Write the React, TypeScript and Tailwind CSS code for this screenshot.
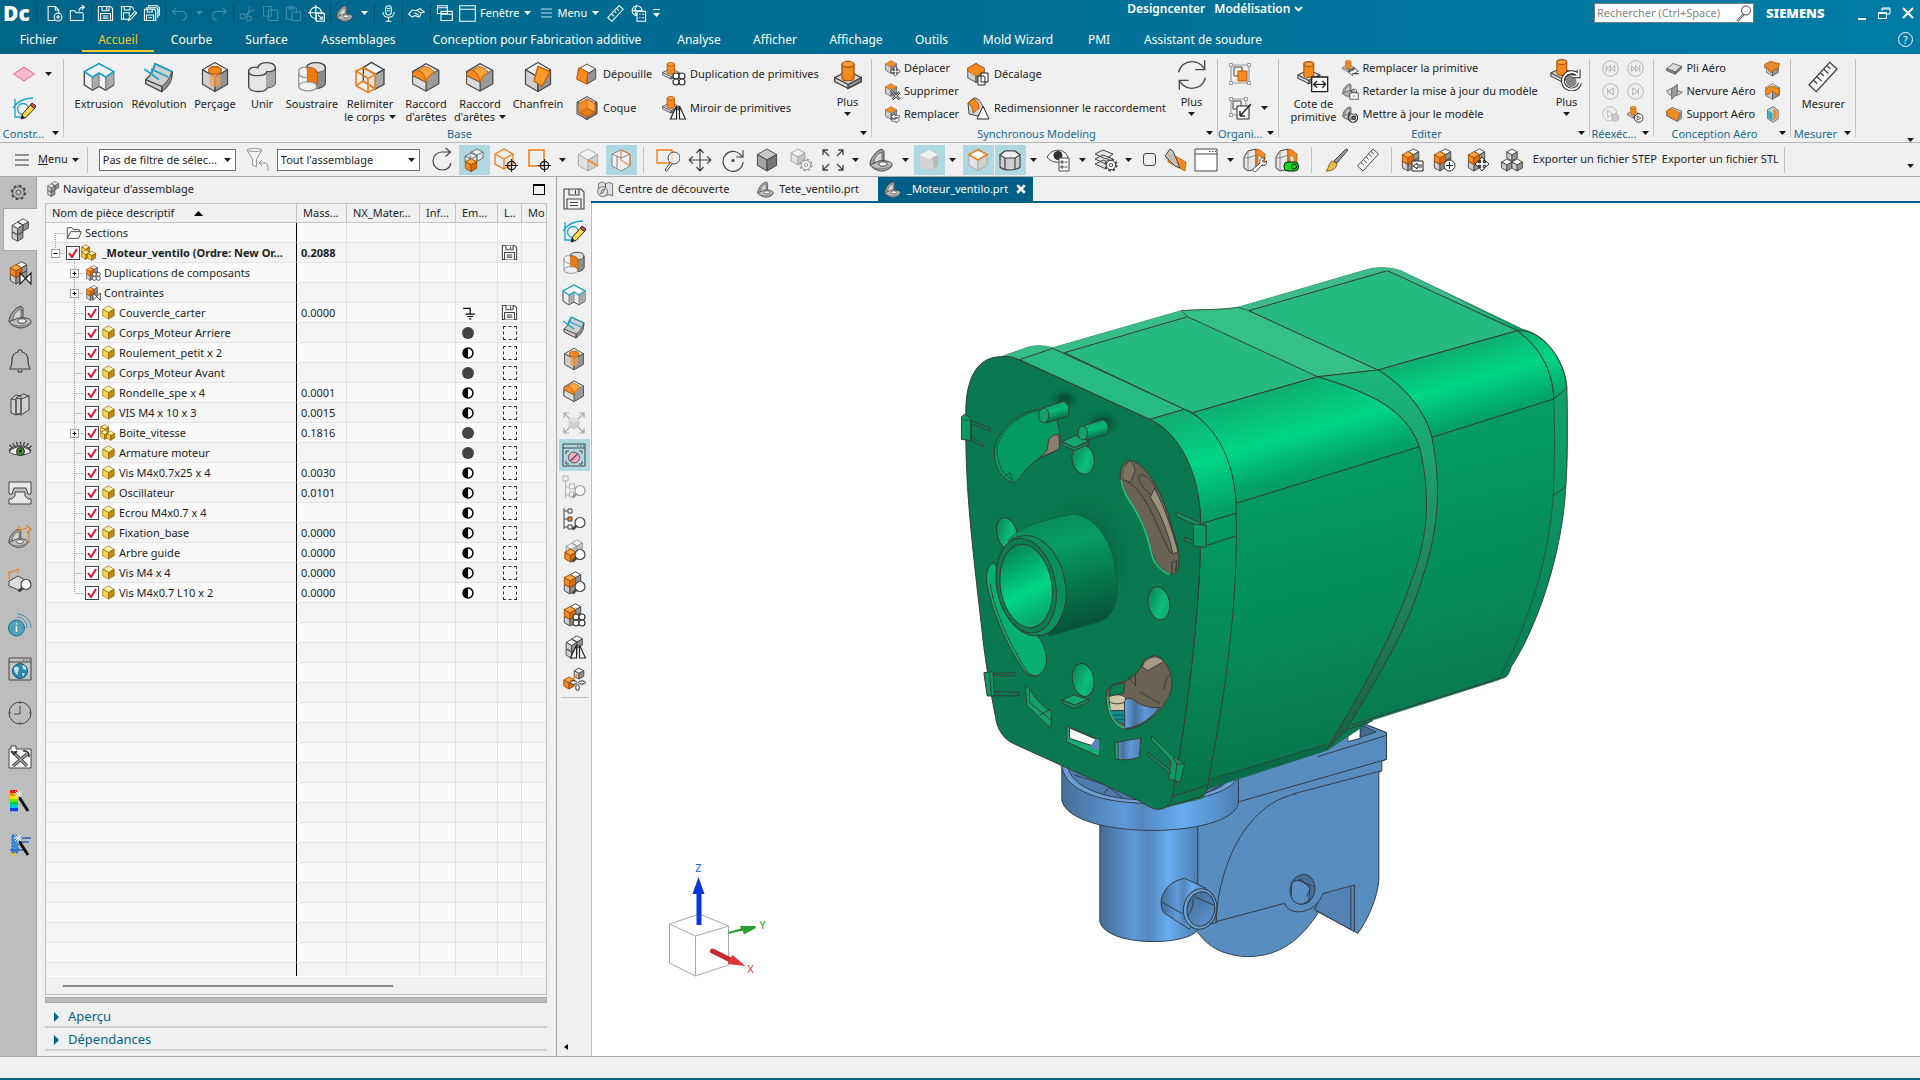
import type { ReactNode } from "react";

type IconMap = Record<string, ReactNode>;

const INK = "#454545";
const ORANGE = "#f58a1f";

const tones = {
  gray: ["#f4f4f4", "#cfcfcf", "#949494", INK],
  pale: ["#f3f3f3", "#e2e2e2", "#cfcfcf", "#a8a8a8"],
  dark: ["#c9c9c9", "#a2a2a2", "#777777", "#3c3c3c"],
  orange: ["#ffa640", "#f58a1f", "#e06c08", "#9a4c08"],
  yellow: ["#fff3a0", "#ffd83a", "#c58a10", "#7a5608"],
};

function Cube({ x = 12, y = 12, s = 9, tone = "gray" }: { x?: number; y?: number; s?: number; tone?: keyof typeof tones }) {
  const [top, left, right, line] = tones[tone];
  const w = s * 0.87;
  const h = s / 2;
  return (
    <g stroke={line} strokeWidth={0.9} strokeLinejoin="round">
      <path d={`M${x} ${y - s}l${w} ${h}l${-w} ${h}l${-w} ${-h}z`} fill={top} />
      <path d={`M${x - w} ${y - h}l${w} ${h}v${s}l${-w} ${-h}z`} fill={left} />
      <path d={`M${x + w} ${y - h}l${-w} ${h}v${s}l${w} ${-h}z`} fill={right} />
    </g>
  );
}

const stack = (
  <>
    <Cube x={13.5} y={12.5} s={6} />
    <Cube x={13.5} y={6.8} s={6} />
    <Cube x={8} y={16.5} s={6.5} />
    <Cube x={8} y={10} s={6.5} tone="orange" />
  </>
);
const grayStack = (
  <>
    <Cube x={15} y={7} s={6.2} />
    <Cube x={9.5} y={17} s={6.2} />
    <Cube x={9.5} y={10.5} s={6.2} />
  </>
);
const boss = (
  <>
    <path d="M2 14l10-5 10 5v3l-10 5-10-5z" fill="#dcdcdc" stroke={INK} />
    <path d="M22 14l-10 5v3l10-5z" fill="#8f8f8f" stroke={INK} />
    <path d="M2 14l10 5" fill="none" stroke={INK} />
    <path d="M7.500 4v10c0 3 9 3 9 0V4z" fill={ORANGE} stroke="#a85208" />
    <ellipse cx="12" cy="4" rx="4.500" ry="2.200" fill="#ffa23c" stroke="#a85208" />
  </>
);
const smallBoss = <g transform="translate(-1 -1) scale(.82)">{boss}</g>;
const mag = (
  <g stroke={INK}>
    <path d="M14.500 18.500l-4 4" strokeWidth="2.600" />
    <circle cx="18" cy="15.500" r="5" fill="#fff" strokeWidth="1.200" />
  </g>
);
const four = (
  <g fill="#fff" stroke="#333" strokeWidth="1.200">
    <circle cx="14" cy="14" r="3" />
    <circle cx="20" cy="14" r="3" />
    <circle cx="14" cy="20" r="3" />
    <circle cx="20" cy="20" r="3" />
  </g>
);
const mirror = (
  <g fill="#fff" stroke="#222" strokeWidth="1.200">
    <path d="M14.500 10v13H8.500zM17.500 10v13h6z" />
  </g>
);
const moveBadge = (
  <g stroke="#222" fill="#fff">
    <path d="M16 9l3 3.500h-1.700v2.200h2.200V13l3.500 3-3.500 3v-1.700h-2.200v2.200H19l-3 3.500-3-3.500h1.700v-2.200h-2.200V19L9 16l3.500-3v1.700h2.200v-2.200H13z" />
  </g>
);
const bracket = (
  <>
    <path d="M1 17C1 10 7 3 12 1.500c2.500 0 3 1 3 3V13l-4 5-6 1z" fill="#a0a0a0" stroke={INK} />
    <path d="M5 15C5 10 8 6 13 4v8l-4 4z" fill="#d6d6d6" stroke={INK} strokeWidth=".7" />
    <path d="M1 17l9-4c4-1 13 0 13 3.500 0 3.500-5 6-10 6.500-5 0-10-3-12-6z" fill="#bdbdbd" stroke={INK} />
    <path d="M1 17c3 3 7 4.500 12 4 5-.500 9-2 10-4.500" fill="none" stroke="#6a6a6a" />
    <ellipse cx="14" cy="16" rx="4.200" ry="2.200" fill="#f0f0f0" stroke={INK} />
  </>
);
const smallBracket = <g transform="scale(.85)">{bracket}</g>;
const floppy = (
  <>
    <path d="M2 2h17l3 3v17H2z" />
    <path d="M7 2v6h10V2M13.500 3v4M5 22V12h14v10M8 15.500h8M8 18.500h8" />
  </>
);
const pencil = (
  <g>
    <path d="M9 23l1.500-5 8-9 4 3.500-8.500 9z" fill="#ffd84a" stroke="#222" />
    <path d="M18.500 9l1.500-2 4 3-1.500 2.500z" fill="#e04848" stroke="#222" />
    <path d="M9 23l1.200-4 2.600 2.600z" fill="#222" />
  </g>
);
const crosshair = (
  <g stroke="#222" fill="none" strokeWidth="1.200">
    <circle cx="17.500" cy="17.500" r="4.200" />
    <path d="M17.500 11v13M11 17.500h13" />
  </g>
);
const gear = (
  <g fill="#fff" stroke={INK}>
    <circle cx="17" cy="17" r="5.200" strokeDasharray="2.300 1.780" strokeWidth="2.600" />
    <circle cx="17" cy="17" r="4.600" />
    <circle cx="17" cy="17" r="1.700" />
  </g>
);
const fillet = (
  <>
    <path d="M2 8l10-6 9.500 5v10L12 22.500 2 17z" fill="#f3f3f3" stroke={INK} />
    <path d="M21.500 7v10L12 22.500V16c1-4 4-7 9.500-9z" fill="#9a9a9a" stroke={INK} strokeWidth=".6" />
    <path d="M2 10l8-5c4 0 7 2 7.500 4L12 16v1L2 12.500z" fill={ORANGE} />
    <path d="M2 17v-7c1-3 3-3 4-3 4 1 6 5 6 9v.500z" fill={ORANGE} stroke="#b85a08" strokeWidth=".7" />
    <path d="M6 7l5-3c4 1 7 3 7 5-3 1-5 3-6 7-.500-4-2-8-6-9z" fill="#f9a43c" stroke="#b85a08" strokeWidth=".7" />
    <path d="M2 17l10 5.500V16L2 11z" fill="#dcdcdc" stroke={INK} strokeWidth=".7" />
  </>
);
const expandArrows = <path d="M2 7V2h5M2 2l6 6M17 2h5v5M22 2l-6 6M2 17v5h5M2 22l6-6M22 17v5h-5M22 22l-6-6" />;
const clipBody = (
  <>
    <path d="M1 9l4-6 8-2v20l-8 2-4-3z" fill="#e6e6e6" stroke={INK} />
    <path d="M5 3v20M1 9l4 1 8-3" fill="none" stroke="#888" />
    <path d="M13 1v20l2-1V7l4 2v9l3-1V6l-5-4z" fill={ORANGE} stroke="#a85208" strokeWidth=".7" />
  </>
);

const ICONS: IconMap = {
  plane: <path d="M1.500 12L12 5l10.500 7L12 19z" fill="#f7b9cd" stroke="#e0668f" />,
  sketch: (
    <>
      <path d="M3 3v18h10M1 12C5 6 12 2 21 2" fill="none" stroke="#15a3cc" strokeWidth="1.300" />
      <circle cx="11" cy="13" r="5.500" fill="none" stroke="#15a3cc" strokeWidth="1.300" />
      {pencil}
    </>
  ),
  extrude: (
    <>
      <path d="M1 8v10l6 4 5-3 5 3 6-4V8L12 2z" fill="#efefef" stroke={INK} />
      <path d="M7 11.500v10l5-3v-10zM17 11.500v10l6-4V8z" fill="#a9a9a9" />
      <path d="M7 11v10.500M17 11v10.500M12 9v10" stroke="#888" />
      <path d="M1 8l11-6 11 6-6 4-5-3-5 3z" fill="#f7f7f7" stroke="#15a3cc" strokeWidth="1.200" />
    </>
  ),
  revolve: (
    <>
      <path d="M2 14c4-3 6-7 7-12l13 6c0 6-3 11-8 15L2 17z" fill="#cfcfcf" stroke={INK} />
      <path d="M14 19c4-3 6-6 7.500-11V13c-1 4-3 7-7.500 10z" fill="#8c8c8c" stroke={INK} strokeWidth=".6" />
      <path d="M2 14l12 5v4" fill="none" stroke={INK} />
      <path d="M9 2l13 6M6 6l13 6M1 6l11 8M9 2C8 5 7 7 6 9" fill="none" stroke="#15a3cc" strokeWidth="1.300" />
    </>
  ),
  hole: (
    <>
      <Cube s={10.8} />
      <path d="M8 8v9c0 3 8 3 8 0V8z" fill="#f0a050" opacity=".75" />
      <ellipse cx="12" cy="7" rx="4.800" ry="2.900" fill={ORANGE} stroke="#c06008" />
    </>
  ),
  unite: (
    <>
      <path d="M9 5c0-5 13-5 13 0v11c0 3-4 4-6 4-1 4-14 4-14-1V8c0-3 4-4 7-3z" fill="#e6e6e6" stroke={INK} />
      <path d="M15 9v11c3 0 7-1 7-4V5c0 2-2 3-5 3z" fill="#a8a8a8" />
      <path d="M2 8c0 4 13 4 13.500 0 4 0 6.500-1 6.500-3" fill="none" stroke={INK} />
    </>
  ),
  subtract: (
    <>
      <path d="M8 5c0-5 14-5 14 0v11c0 3-3 4-6 4.500V9c-1-3-4-4-8-4z" fill="#dedede" stroke={INK} />
      <path d="M15.500 8.500c3 0 6.500-1 6.500-3.500v11c0 3-3 4-6 4.500z" fill="#8e8e8e" stroke={INK} strokeWidth=".6" />
      <path d="M2 18.500V9c0 3 4 4 7 3.500v4c-4 0-7 0-7 2z" fill="#f7f7f7" />
      <path d="M8.500 5c4-1 7 1 7.500 5v10c-1-3-3-5-7.500-4z" fill="#f07a10" stroke="#b85a08" strokeWidth=".6" />
      <path d="M2 8v11c0 4.500 14 4.500 14 0M2 8c0-3 4-4 6.500-3M2 8c0 4 4 4.500 6.500 4.500M2 19c0-4 12-5 14 0" fill="none" stroke="#999" />
    </>
  ),
  trim: (
    <>
      <path d="M7 5l6-4 9.500 5.500L16 10z" fill="#f4f4f4" stroke={INK} />
      <path d="M22.500 6.500v11L16 21V10z" fill="#a8a8a8" stroke={INK} />
      <path d="M7 5l9 5v11l-9-6z" fill="#e2e2e2" stroke={INK} />
      <path d="M1.500 7.500L7 5l9 5-5.500 3zM1.500 7.500v11l9 5 5.500-3V10M10.500 13v10.500M1.500 18.500L7 15l9 6" fill="none" stroke="#ee7c12" strokeWidth="1.200" />
    </>
  ),
  fillet,
  chamfer: (
    <>
      <Cube s={10.8} />
      <path d="M12 4l9 4-6 11-6-4z" fill="#ff9a28" stroke="#c06008" />
    </>
  ),
  draft: (
    <>
      <Cube s={10} />
      <path d="M4 5.500L13 10l-1.500 12L1.500 17z" fill={ORANGE} stroke="#b85a08" />
    </>
  ),
  shell: (
    <>
      <Cube s={11.500} tone="dark" />
      <path d="M4 7.500l8-4.500 8 4.500v9L12 21l-8-4.500z" fill="#ffa640" stroke="#b85a08" />
      <path d="M4 16.500l8-4.500 8 4.500L12 21zM12 3v9" fill="#e77a14" stroke="#b85a08" />
      <path d="M4 7.500V16.500l8-4.500V3z" fill="#f08a22" />
    </>
  ),
  boss,
  bossPattern: <>{smallBoss}{four}</>,
  bossMirror: <>{smallBoss}{mirror}</>,
  bossSwap: (
    <>
      {smallBoss}
      <path d="M9 14h8v-3l6 4.500-6 4h8M23 19H15v3l-6-4.500 6-3" fill="#fff" stroke="#222" />
    </>
  ),
  bossDim: (
    <>
      {smallBoss}
      <path d="M11 12h12v11H11z" fill="#fff" stroke="#222" />
      <path d="M12.500 17.500h9M15 15l-2.500 2.500L15 20M19 15l2.500 2.500L19 20" fill="none" stroke="#222" />
    </>
  ),
  bossRedo: (
    <>
      {smallBoss}
      <circle cx="16" cy="17" r="4" fill="#888" />
      <path d="M21 12a6.500 6.500 0 1 0 1.500 6M21.500 8v5h-5" fill="none" stroke="#222" strokeWidth="2.800" />
      <path d="M21 12a6.500 6.500 0 1 0 1.500 6M21.500 8v5h-5" fill="none" stroke="#fff" strokeWidth="1.400" />
    </>
  ),
  bossPlay: (
    <>
      {smallBoss}
      <circle cx="16.500" cy="17" r="6" fill="#fff" stroke="#222" strokeWidth="1.300" />
      <path d="M14.500 14l5 3-5 3z" fill="none" stroke="#222" />
    </>
  ),
  moveFace: <><Cube x={10} y={10} s={9} /><path d="M10 1l8 4.500L10 10 2 5.500z" fill={ORANGE} />{moveBadge}</>,
  deleteFace: (
    <>
      <Cube x={10} y={10} s={9} />
      <path d="M10 1l8 4.500L10 10 2 5.500z" fill={ORANGE} />
      <path d="M12 13l10 10M22 13L12 23" stroke="#222" strokeWidth="3.400" />
      <path d="M12 13l10 10M22 13L12 23" stroke="#fff" strokeWidth="1.400" />
    </>
  ),
  replaceFace: (
    <>
      <Cube x={10} y={10} s={9} />
      <path d="M10 1l8 4.500L10 10 2 5.500z" fill={ORANGE} />
      <path d="M10 15l5-4v2.500h7v3h-7V19zM22 20l-5 4v-2.500h-6v-3h6V16z" fill="#fff" stroke="#222" strokeWidth=".8" />
    </>
  ),
  offsetFace: (
    <>
      <Cube x={10} y={11} s={9.5} />
      <path d="M10 1.500l8 4.700v4L10 14l-8.200-5V6z" fill={ORANGE} stroke="#a85208" strokeWidth=".6" />
      <path d="M15 11h7v9h-7zM12 14h6l1 2v7h-7z" fill="#fff" stroke="#222" />
    </>
  ),
  resizeBlend: (
    <>
      <path d="M2 7l6-5c5 0 9 6 9 12l-5 6-9-2z" fill="#d6d6d6" stroke={INK} />
      <path d="M2 7l5-4c4 1 6 5 6 9l-6 5c0-5-2-8-5-10z" fill={ORANGE} stroke="#a85208" />
      <path d="M17 10l6 13H11z" fill="#fff" stroke="#222" />
    </>
  ),
  refresh: (
    <g fill="none" stroke={INK}>
      <path d="M2 10C3 5 7 2 12 2c4 0 7 2 9 5M21.500 1v7h-7M22 14c-1 5-5 8-10 8-4 0-7-2-9-5M2.500 23v-7h7" />
    </g>
  ),
  group: (
    <g fill="none" stroke="#999">
      <path d="M3 3h18v18H3z" strokeWidth="1.200" />
      <path d="M1.500 1.500h3v3h-3zM19.500 1.500h3v3h-3zM1.500 19.500h3v3h-3zM19.500 19.500h3v3h-3z" fill="#fff" />
      <path d="M6 5h8v9H6z" stroke={INK} />
      <path d="M10 9h9v10h-9z" fill={ORANGE} stroke="#b85a08" />
    </g>
  ),
  groupEdit: (
    <g fill="none" stroke="#999">
      <path d="M3 3h15v16H3z" />
      <path d="M1.500 1.500h3v3h-3zM16.500 1.500h3v3h-3zM1.500 17.500h3v3h-3z" fill="#fff" />
      <path d="M5 5h8v8H5z" stroke={INK} />
      <path d="M9 10h12v13H9z" fill="#fff" stroke="#222" />
      <path d="M12 20v-5M12 20h5M12 20L23 8" stroke="#222" strokeWidth="1.500" />
    </g>
  ),
  lockPart: (
    <>
      {smallBracket}
      <path d="M11 14h12v9H11z" fill="#fff" stroke="#222" />
      <path d="M13.500 14v-3c0-3 7-3 7 0v3M17 17v3" fill="none" stroke="#222" />
    </>
  ),
  updatePart: (
    <>
      {smallBracket}
      <path d="M12 13h-2v-5M10 13a6.500 6.500 0 1 0 9-2M14 17c0-3 5-3 5 0s-4 3-4 0" fill="none" stroke="#222" strokeWidth="1.500" />
    </>
  ),
  first: <g fill="none" stroke="#999"><circle cx="12" cy="12" r="11" /><path d="M6 7v10M12 8l-5 4 5 4zM18 8l-5 4 5 4z" /></g>,
  last: <g fill="none" stroke="#999"><circle cx="12" cy="12" r="11" /><path d="M18 7v10M6 8l5 4-5 4zM12 8l5 4-5 4z" /></g>,
  prev: <g fill="none" stroke="#999"><circle cx="12" cy="12" r="11" /><path d="M8 7v10M16 7l-7 5 7 5z" /></g>,
  next: <g fill="none" stroke="#999"><circle cx="12" cy="12" r="11" /><path d="M16 7v10M8 7l7 5-7 5z" /></g>,
  playGray: <g fill="none" stroke="#a4a4a4"><circle cx="11" cy="11" r="10" /><path d="M8 6l7 5-7 5z" /><path d="M14 13l5-3 4 3v6l-5 3-4-3z" fill="#ccc" /></g>,
  aeroFold: (
    <g stroke={INK}>
      <path d="M1 12L10 5l12 4-9 8z" fill="#dcdcdc" />
      <path d="M1 12v3l12 5v-3zM22 9v3l-9 8v-3z" fill="#8f8f8f" />
    </g>
  ),
  aeroRib: (
    <g stroke={INK}>
      <path d="M1 11l8-4v11l-5-2zM14 10l9 3-8 5-4-1z" fill="#d8d8d8" />
      <path d="M8 8l8-6v13l-8 8z" fill="#9c9c9c" />
    </g>
  ),
  aeroSupport: (
    <>
      <path d="M1 7L9 2l13 5v10l-6 5L1 14z" fill="#d0d0d0" stroke={INK} />
      <path d="M16 12l6-5v10l-6 5z" fill="#8e8e8e" />
      <path d="M1 7l6-4 12 6-3 12L2 13z" fill={ORANGE} stroke="#a85208" strokeWidth=".7" />
    </>
  ),
  aeroA: (
    <>
      <Cube y={13} s={9.5} />
      <path d="M1 6l8-4 13 3-2 7-7 2-2 4-4-2-1-4-5-1z" fill="#e9862c" stroke="#9a5210" />
    </>
  ),
  aeroB: (
    <>
      <Cube s={11} />
      <path d="M2 12c2-10 18-10 20 0l-2 5-4-2c-1-4-7-4-8 0l-4 2z" fill={ORANGE} stroke="#9a5210" />
    </>
  ),
  aeroC: (
    <>
      <path d="M5 5l8-4 7 5v12l-7 5-8-5z" fill="#cfcfcf" stroke={INK} />
      <path d="M6 6l6 4v11l-6-4z" fill="#32a8c8" />
      <path d="M13 4l5 3v10l-5 4z" fill={ORANGE} />
    </>
  ),
  ruler: (
    <g fill="#f7f7f7" stroke={INK}>
      <path d="M17 1l5.500 5L7 23l-5.500-5z" />
      <path d="M15 3.500l2.500 2.300M12.500 6l3.500 3.300M10 9l2.500 2.300M7.500 11.800l3.500 3.300M5 14.500l2.500 2.300" />
    </g>
  ),
  funnel: (
    <g fill="#f4f4f4" stroke="#999">
      <path d="M1 2c0-2 15-2 15 0L10.500 11v8l-4-2v-6z" />
      <path d="M1 2c1 2 14 2 15 0M16 12l-3 3 3 3M13 15h6c3 0 3 5 3 8" fill="none" />
    </g>
  ),
  rotateCw: <path d="M20 15c-1 4-4 7-9 7-5 0-9-4-9-9s4-9 9-9h8M14.500 0L19.500 4l-5 4.500" fill="none" stroke={INK} strokeWidth="1.200" />,
  selTop: (
    <>
      <g stroke="#666" strokeWidth=".9">
        <path d="M9 4l6-3 6 3v6l-7 4-6-3z" fill="#e9f1f3" fillOpacity=".8" />
        <path d="M9 4l6 3 6-3M15 7v6M3 8l6-3 6 3v6l-6 3-6-3zM3 8l6 3 6-3" fill="#e9f1f3" fillOpacity=".6" />
      </g>
      <Cube x={9} y={17} s={6.500} tone="orange" />
    </>
  ),
  boxTarget: <><path d="M1 6l9-5 9 5v10l-9 5-9-5zM1 6l9 5 9-5M10 11v10" fill="none" stroke="#ee7c12" strokeWidth="1.300" />{crosshair}</>,
  squareTarget: <><path d="M2 2h15v16H2z" fill="none" stroke="#ee7c12" strokeWidth="1.500" />{crosshair}</>,
  cubeEdge: <><Cube s={11} tone="pale" /><path d="M12 12l10 6" stroke={ORANGE} strokeWidth="2" /></>,
  cubeWire: (
    <g fill="#f0f0f0" stroke="#888">
      <path d="M3 6l9-4 9 4v12l-9 5-9-5z" />
      <path d="M3 6l9 4 9-4M8 8v12" fill="none" />
      <path d="M12 2v10l9 6V6z" fill="none" stroke="#e8742a" />
    </g>
  ),
  zoomBox: <><path d="M1 2h15v13H1z" fill="none" stroke="#ee7c12" strokeWidth="1.300" /><circle cx="18" cy="10" r="6" fill="#efefef" fillOpacity=".7" stroke={INK} /><path d="M14 15l-5 7 1.500 1.500L16 16" fill="#fff" stroke={INK} /></>,
  pan: <path d="M12 1v22M1 12h22M12 1L8.500 5M12 1l3.500 4M12 23l-3.500-4M12 23l3.500-4M1 12l4-3.500M1 12l4 3.500M23 12l-4-3.500M23 12l-4 3.500" fill="none" stroke={INK} strokeWidth="1.200" />,
  orbit: <g fill="none" stroke={INK} strokeWidth="1.200"><path d="M21 9a10 10 0 1 0 1 5M22 2v7h-7" /><circle cx="12" cy="12.500" r="1" fill={INK} /></g>,
  cube: <Cube s={11} tone="dark" />,
  cubeGear: <g opacity=".45"><Cube x={9} y={9} s={8} />{gear}</g>,
  fit: <g fill="none" stroke={INK} strokeWidth="1.300">{expandArrows}</g>,
  bracket,
  shade: <><path d="M3 7l9-5 9 5v11c-3 5-15 5-18 0z" fill="#d3d3d3" /><path d="M3 7l9-5 9 5-9 4z" fill="#f1f1f1" /><path d="M15 10l6-3v11l-4 3z" fill="#bababa" /></>,
  topEdges: <><Cube s={10.5} tone="pale" /><path d="M12 1.500l9 5.200-9 5.300-9-5.300z" fill="#fff" stroke="#ee7c12" strokeWidth="1.500" /></>,
  shadeEdges: (
    <g stroke={INK} strokeWidth="1.200">
      <path d="M2 7l5-4h10l5 4v12c-4 4-16 4-20 0z" fill="#cdcdcd" />
      <path d="M2 7l5-4h10l5 4-5 3H7zM7 10v11.500M17 10v11.500" fill="#efefef" />
    </g>
  ),
  eyeList: (
    <>
      <path d="M1 9c5-9 17-9 21 0-5 7-16 7-21 0z" fill="#fff" stroke={INK} />
      <circle cx="12" cy="7.500" r="4.500" fill="#333" />
      <path d="M13 10h10v13H13z" fill="#fff" stroke={INK} />
      <path d="M15 13h2v2h-2zM15 18h2v2h-2zM18.500 14h3M18.500 19h3" fill="none" stroke={INK} />
    </>
  ),
  layers: (
    <>
      <path d="M1 16l8-4 10 4-7 5zM1 11l8-4 10 4-7 5zM1 6l8-4 10 4-7 5z" fill="#e4e4e4" stroke={INK} />
      {gear}
    </>
  ),
  clip: (
    <>
      <path d="M3 4l18 10-1 9L3 14z" fill={ORANGE} stroke="#a85208" strokeWidth=".7" transform="translate(1 0)" />
      <path d="M1 8l5-7 3 2 7 17-5-2z" fill="#c4c4c4" fillOpacity=".9" stroke={INK} />
    </>
  ),
  windowLight: <><path d="M1 1h22v22H1z" fill="#fff" stroke={INK} /><path d="M1 6h22M15 3.500h1.500M18 3.500h1.500M21 3.500h1" stroke={INK} /></>,
  clipTool: (
    <>
      {clipBody}
      <path d="M10 21l7-6c-1-4 2-6 5-5l-2.500 3 1.500 1.500L24 13c0 3-2 5-5 4l-6 6.500c-2 1-4-1-3-2.500z" fill="#fff" stroke={INK} />
    </>
  ),
  clipToggle: (
    <>
      {clipBody}
      <rect x="9" y="14" width="14.500" height="9" rx="4" fill="#14d81e" stroke="#111" />
      <circle cx="19" cy="18.500" r="2.500" fill="#14d81e" stroke="#111" />
    </>
  ),
  brush: <><path d="M22 1l2 1L13 15l-3-2z" fill="#999" stroke={INK} /><path d="M9 13l4 3c-1 5-5 7-11 7 3-2 2-8 7-10z" fill="#e7c04a" stroke="#7a5c10" /></>,
  addInto: <>{stack}<path d="M12 13h11v10H12z" fill="#fff" stroke="#222" /><path d="M22 17h-5v-2l-4 3 4 3v-2h5" fill="none" stroke="#222" /></>,
  addPlus: <>{stack}<circle cx="17.500" cy="17.500" r="5.500" fill="#fff" stroke="#222" /><path d="M17.500 14v7M14 17.500h7" stroke="#222" /></>,
  addMove: <>{stack}{moveBadge}</>,
  three: <><Cube y={7} s={6} /><Cube x={6.800} y={17} s={6} /><Cube x={17.200} y={17} s={6} /></>,
  grayStack,
  stackLink: <>{stack}<path d="M12 12v11l11-11v11z" fill="#fff" stroke="#222" strokeWidth="1.200" /></>,
  stackPattern: <>{stack}{four}</>,
  stackMag: <>{stack}{mag}</>,
  ghostMag: <><g opacity=".5">{grayStack}</g><Cube x={8.500} y={16.500} s={6.500} tone="orange" />{mag}</>,
  stackMirror: <>{grayStack}{mirror}</>,
  explode: (
    <>
      <Cube x={17} y={6.500} s={5.500} />
      <Cube x={7} y={16} s={6} tone="orange" />
      <path d="M11 12l4-4" stroke="#ee7c12" strokeWidth="1.500" />
      <g fill="#fff" stroke="#222">
        <ellipse cx="11.500" cy="15.500" rx="3.200" ry="1.800" />
        <ellipse cx="20" cy="15.500" rx="3.400" ry="1.600" />
        <ellipse cx="15.500" cy="20.500" rx="1.800" ry="3" />
      </g>
    </>
  ),
  bigGear: (
    <g fill="none" stroke={INK}>
      <circle cx="12" cy="12" r="9.500" strokeWidth="2.600" strokeDasharray="4 3.460" />
      <circle cx="12" cy="12" r="8" fill="#bdbdbd" strokeWidth="1.200" />
      <circle cx="12" cy="12" r="3.500" strokeWidth="1.200" />
    </g>
  ),
  bell: <g fill="none" stroke={INK} strokeWidth="1.200"><path d="M10 3c0-3 4-3 4 0 4 1 6 4 6 8 0 6 1 7 2 8v1H2v-1c1-1 2-2 2-8 0-4 2-7 6-8zM10 21c0 3 4 3 4 0" /></g>,
  books: <g fill="#cfcfcf" stroke={INK}><path d="M3 6l5-4 5 1v17l-5 2-5-2zM8 5l7-4 6 2v14l-8 5-5-1zM8 5l5 1 8-3M13 6v16M3 6l5 1v15" /></g>,
  eye: (
    <>
      <path d="M1 15c6-7 16-7 22 0-6 4-16 4-22 0z" fill="#eee" stroke="#444" />
      <circle cx="12.500" cy="14.500" r="4" fill="#4f8f2a" stroke="#222" />
      <circle cx="12.500" cy="14" r="1.600" fill="#111" />
      <path d="M1 14C5 7 19 7 23 14M4 10L1.500 8M6.500 9l-2-3M9.500 8l-1-3M12.500 7.500v-3M15.500 8l1-3M18.500 9l2-3M21 11l2.500-2" fill="none" stroke="#333" strokeWidth="1.200" />
    </>
  ),
  press: <><path d="M1 1h22v12h-3l-2-6H6l-2 6H1z" fill="#e8e8e8" stroke={INK} /><path d="M1 23v-5h3l3-3v-4h10v4l3 3h3v5z" fill="#e8e8e8" stroke={INK} /></>,
  bracketDim: <><g transform="translate(0 3) scale(.85)">{bracket}</g><path d="M11 5l8-2M21 5v13M11 1v7M19 8l4-4M18 0l6 5" fill="none" stroke="#ee7c12" strokeWidth="1.200" /></>,
  partMag: <><path d="M1 12l9-5 11 6-8 9-12-5z" fill="#dcdcdc" stroke={INK} /><path d="M1 10V2M1 4l10-4M10 0v5" stroke="#ee7c12" />{mag}</>,
  info: (
    <>
      <circle cx="8.500" cy="15" r="8" fill="#4fa0bd" stroke="#24708c" />
      <path d="M8.500 13v6M8.500 10v1.500" stroke="#fff" strokeWidth="1.500" />
      <path d="M9 4c6 0 10 5 10 11M9 1c8 0 14 6 14 14" fill="none" stroke="#3f90b0" />
    </>
  ),
  globe: (
    <>
      <path d="M1 1h22v22H1z" fill="#c4c4c4" stroke={INK} />
      <path d="M1 5h22M15 3h1.500M18 3h1.500M21 3h1" stroke={INK} />
      <circle cx="12" cy="14" r="7.500" fill="#2b86a8" stroke="#1a5a76" />
      <path d="M6 11c2-3 5-1 5 1s-2 3-1 6c-3-1-4-4-4-7zM14 8c3 0 5 3 4 5l-3-1zM14 16l3 0-2 4z" fill="#bfe4f0" />
    </>
  ),
  clock: <g fill="none" stroke={INK}><circle cx="12" cy="12" r="11" /><path d="M12 5v8H6M12 1v2M12 21v2M1 12h2M21 12h2" /></g>,
  tools: (
    <>
      <path d="M1 4h2V1h5v3h15v19H1z" fill="#fff" stroke={INK} />
      <path d="M5 7l14 14M19 9L5 21" stroke="#333" strokeWidth="3.200" />
      <path d="M5 7l14 14M19 9L5 21" stroke="#aaa" strokeWidth="1.500" />
      <path d="M3 6l3 3 3-3M15 6c4-1 6 2 6 6" fill="none" stroke="#333" strokeWidth="1.800" />
    </>
  ),
  spectrum: (
    <>
      {["#f21a10", "#ff8a00", "#ffe600", "#6fe000", "#00d060", "#00c8e8", "#1040ff"].map((c, i) => (
        <path key={c} d={`M2 ${1 + i * 3}h8v3.200H2z`} fill={c} />
      ))}
      <path d="M11 8l9 14" stroke="#111" strokeWidth="3" />
      <path d="M10 1v9M6 5h8M7 2l6 6M13 2L7 8" stroke="#fff" />
    </>
  ),
  wand: (
    <>
      <path d="M4 2h6v18H4z" fill="#3f8fe0" stroke="#1d5bb0" strokeDasharray="2 1" />
      <path d="M12 5h11M12 9h9M2 17h14" stroke="#2e62c8" strokeWidth="1.600" />
      <path d="M3 21h7" stroke="#f2c500" strokeWidth="2.500" strokeDasharray="2 1" />
      <path d="M11 8l9 14" stroke="#111" strokeWidth="3" />
      <path d="M10 1v9M6 5h8M7 2l6 6M13 2L7 8" stroke="#fff" />
    </>
  ),
  fitGray: <><g fill="none" stroke="#aaa" strokeWidth="1.200">{expandArrows}</g><path d="M12 6l5.500 3v6.500L12 18.500l-5.500-3V9z" fill="#cdcdcd" /><path d="M12 6l5.500 3L12 12 6.500 9z" fill="#dedede" /></>,
  floppyDark: <g fill="none" stroke={INK} strokeWidth="1.100">{floppy}</g>,
  floppyBold: <g fill="#fff" stroke={INK} strokeWidth="1.500">{floppy}</g>,
  noSelect: (
    <>
      <path d="M1 1h22v22H1z" fill="none" stroke={INK} />
      <path d="M1 5h22M15 3h1.500M18 3h1.500M21 3h1M4 11V8h3M17 8h3v3M4 18v3h3M17 21h3v-3" fill="none" stroke={INK} />
      <circle cx="12" cy="14.500" r="5.500" fill="#f6a8bd" stroke="#555" />
      <path d="M8.500 18l7-7" stroke="#555" strokeWidth="1.500" />
    </>
  ),
  treeMagGray: <g opacity=".5"><path d="M1 1h5v5H1zM3.500 6v17M3.500 12h4M3.500 20h4M7.500 9h5v5h-5zM7.500 17h4v5h-4z" fill="none" stroke="#777" />{mag}</g>,
  treeMag: (
    <>
      <path d="M2 1v21M2 4h4M2 12h4M2 20h4M6 2h4v4H6zM6 18h4v4H6z" fill="none" stroke={INK} />
      <path d="M6 10h4v4H6z" fill={ORANGE} stroke={INK} />
      {mag}
    </>
  ),
  discover: <g fill="#e0e0e0" stroke={INK}><path d="M2 4l5-3 5 3v14H2zM12 4l5-2 5 2v17l-5-2-5 2z" /><circle cx="8" cy="15" r="7" /><path d="M11 11l-2 5-4 2 2-5z" /></g>,
  folder: <path d="M2 20V4h7l2 3h9v3M2 20l5-10h16l-4 10z" fill="#fff" stroke={INK} strokeWidth="1.400" />,
  part: <Cube s={10.5} tone="yellow" />,
  asm: <><Cube x={8} y={7.500} s={6.500} tone="yellow" /><Cube x={8} y={15} s={6.500} tone="yellow" /><Cube x={16.500} y={16.500} s={6.500} tone="yellow" /></>,
  ground: <path d="M2 4h12v10M6 14h16M9 18h10M12 22h4" fill="none" stroke="#000" strokeWidth="2" />,
};

const W = (d: ReactNode) => <g fill="none" stroke="#fff" strokeWidth="1.500">{d}</g>;
const WHITE_ICONS: IconMap = {
  newFile: W(<><path d="M13 22H3V2h10l5 5v4M13 2v5h5" /><circle cx="17" cy="17" r="5.500" /><path d="M17 14v6M14 17h6" /></>),
  open: W(<><path d="M20 12v10H2V8h6l2 3h10M14 9c0-4 2-6 7-6M18 0l4 3-4 4" /></>),
  floppy: W(floppy),
  saveAs: W(<><path d="M14 20H2V2h14l3 3v3M6 2v5h8V2M5 20v-9h8v5" /><path d="M12 22l1-4 8-9 2.500 2-8 9z" /></>),
  saveAll: W(<><path d="M2 6h14l2 2v14H2zM5 6V4h14l2 2v12M8 4V1h12l3 3v11M6 6v4h7V6M5 22v-8h10v8M8 18h5" /></>),
  undo: W(<path d="M2 9h12c10 0 10 12 2 12M7 4L2 9l5 5" />),
  redo: W(<path d="M22 9H10C0 9 0 21 8 21M17 4l5 5-5 5" />),
  cut: W(<><circle cx="5" cy="16" r="3.500" /><circle cx="14" cy="19" r="3.500" /><path d="M8 14L22 6M12 16L15 2" /></>),
  copy: W(<path d="M2 2h11v14H2zM9 7h13v15H9z" fill="#00658c" />),
  paste: W(<path d="M9 20H2V4h14v5M6 2h6v4H6zM10 10h12v12H10z" />),
  aim: W(<><circle cx="11" cy="11" r="8" /><path d="M11 0v22M0 11h22" /><path d="M12 12h11v11H12z" fill="#00658c" /><path d="M14 14l6 6M20 16v4h-4" /></>),
  bracket,
  mic: W(<><rect x="8" y="1" width="8" height="13" rx="4" /><path d="M4 10c0 10 16 10 16 0M12 18v5M8 23h8M10 5h4M10 8h4" /></>),
  plug: W(<path d="M1 13l5-6 5 1 6-3 6 5-4 1-3 6-6-2-4 2zM9 11l6 3M13 8l5 3" />),
  windows: W(<path d="M2 1h14v11H2zM2 4h14M7 9h16v13H7zM7 13h16M10 11h1" fill="#00658c" />),
  window: W(<path d="M1 1h22v22H1zM1 6h22" />),
  ruler: W(<path d="M17 1l6 5L7 23l-6-5zM14 5l3 3M11 9l2 2M7 13l3 3" />),
  report: W(<><circle cx="10" cy="8" r="7" /><path d="M3 8h14M10 1c-4 4-4 10 0 14" /><path d="M10 9h12v14H10z" fill="#00658c" /><path d="M13 13h2M17 13h3M13 18h2M17 18h3" /></>),
};

function Icon({ name, size = 24 }: { name: string; size?: number }) {
  return (
    <svg width={size} height={size} viewBox="0 0 24 24" className="shrink-0" aria-hidden="true">
      {ICONS[name]}
    </svg>
  );
}

function Caret() {
  return (
    <svg width="7" height="4" viewBox="0 0 7 4" className="inline-block shrink-0 fill-current" aria-hidden="true">
      <path d="M0 0h7L3.500 4z" />
    </svg>
  );
}

/* ---------- title bar ---------- */

function TitleIcon({ name, label, dim }: { name: string; label: string; dim?: boolean }) {
  return (
    <button type="button" aria-label={label} className={`flex h-full w-[23px] items-center justify-center ${dim ? "opacity-25" : ""}`}>
      <svg width="17" height="17" viewBox="0 0 24 24" aria-hidden="true">{WHITE_ICONS[name]}</svg>
    </button>
  );
}

const TitleSep = () => <span className="mx-[2px] h-5 w-px bg-[#00506f]" />;

function Burger({ className }: { className: string }) {
  return (
    <svg width="14" height="12" viewBox="0 0 14 12" className={className} aria-hidden="true">
      <path d="M0 1h14M0 6h14M0 11h14" stroke="currentColor" />
    </svg>
  );
}

function TitleBar() {
  return (
    <div className="flex h-[26px] items-center">
      <span className="w-[36px] pl-[3px] text-[21px] leading-[26px] font-black">Dc</span>
      <span className="mr-[6px] h-5 w-px bg-[#00506f]" />
      <TitleIcon name="newFile" label="Nouveau" />
      <TitleIcon name="open" label="Ouvrir" />
      <TitleSep />
      <TitleIcon name="floppy" label="Enregistrer" />
      <TitleIcon name="saveAs" label="Enregistrer sous" />
      <TitleIcon name="saveAll" label="Enregistrer tout" />
      <TitleSep />
      <span className="flex h-full">
        <TitleIcon name="undo" label="Annuler" dim />
      </span>
      <span className="flex w-[17px] justify-center opacity-25"><Caret /></span>
      <TitleIcon name="redo" label="Rétablir" dim />
      <TitleSep />
      <TitleIcon name="cut" label="Couper" dim />
      <TitleIcon name="copy" label="Copier" dim />
      <TitleIcon name="paste" label="Coller" dim />
      <TitleIcon name="aim" label="Cibler" />
      <TitleSep />
      <TitleIcon name="bracket" label="Pièce" />
      <span className="flex w-[16px] justify-center"><Caret /></span>
      <TitleSep />
      <TitleIcon name="mic" label="Micro" />
      <TitleSep />
      <TitleIcon name="plug" label="Connecter" />
      <TitleSep />
      <TitleIcon name="windows" label="Fenêtres" />
      <button type="button" className="flex h-full items-center gap-1">
        <svg width="17" height="17" viewBox="0 0 24 24" className="ml-[3px]" aria-hidden="true">{WHITE_ICONS.window}</svg>
        Fenêtre
        <span className="ml-[1px] flex"><Caret /></span>
      </button>
      <button type="button" className="ml-[10px] flex h-full items-center gap-[5px]">
        <Burger className="w-[11px]" />
        Menu
        <Caret />
      </button>
      <span className="ml-[5px] flex h-full">
        <TitleIcon name="ruler" label="Mesurer" />
        <TitleIcon name="report" label="Rapport" />
      </span>
      <span className="flex w-3 flex-col items-center gap-[3px]">
        <span className="h-px w-[7px] bg-white" />
        <Caret />
      </span>

      <span className="flex-[8]" />
      <span className="mb-2 flex items-center gap-[9px] text-[12px] font-semibold">
        <span>Designcenter</span>
        <button type="button" className="flex items-center gap-1">
          Modélisation
          <svg width="9" height="6" viewBox="0 0 9 6" fill="none" aria-hidden="true"><path d="M1 1l3.500 3.500L8 1" stroke="#fff" strokeWidth="1.800" /></svg>
        </button>
      </span>
      <span className="flex-[5]" />

      <label className="flex h-5 w-[160px] items-center border border-[#7a7a7a] bg-white text-[#222]">
        <input type="text" aria-label="Rechercher" placeholder="Rechercher (Ctrl+Space)" className="w-[140px] bg-transparent pl-[2px] outline-none placeholder:text-[#858585]" />
        <svg width="17" height="17" viewBox="0 0 17 17" fill="none" stroke="#444" className="shrink-0" aria-hidden="true">
          <circle cx="11" cy="5.500" r="4.500" />
          <path d="M8 9l-6 6.500 1 1L9.500 9.500" />
        </svg>
      </label>
      <span className="ml-3 w-[92px] text-[13px] leading-[26px] font-black">SIEMENS</span>
      <button type="button" aria-label="Réduire" className="flex h-full w-5 items-center">
        <span className="mt-[11px] h-[2px] w-2 bg-white" />
      </button>
      <button type="button" aria-label="Restaurer" className="flex h-full w-6 items-center">
        <svg width="13" height="12" viewBox="0 0 13 12" fill="none" stroke="#fff" aria-hidden="true"><path d="M4 4V1h8v6H9M4 2h8M.5 5.500h8v6h-8zM.5 6.500h8" /></svg>
      </button>
      <button type="button" aria-label="Fermer" className="flex h-full w-[18px] items-center">
        <svg width="12" height="12" viewBox="0 0 12 12" aria-hidden="true"><path d="M1 1l10 10M11 1L1 11" stroke="#fff" strokeWidth="2" /></svg>
      </button>
    </div>
  );
}

const menuTabs: [string, string][] = [
  ["Fichier", "w-[77px] mr-[5px]"],
  ["Accueil", "w-[72px]"],
  ["Courbe", "w-[75px]"],
  ["Surface", "w-[75px]"],
  ["Assemblages", "w-[109px]"],
  ["Conception pour Fabrication additive", "w-[248px]"],
  ["Analyse", "w-[76px]"],
  ["Afficher", "w-[76px]"],
  ["Affichage", "w-[86px]"],
  ["Outils", "w-[65px]"],
  ["Mold Wizard", "w-[108px]"],
  ["PMI", "w-[54px]"],
  ["Assistant de soudure", "w-[154px]"],
];

function MenuTabs() {
  return (
    <nav className="flex h-[28px] items-start text-[12px]">
      {menuTabs.map(([name, width]) => (
        <button
          key={name}
          type="button"
          className={`h-[26px] border-b-2 pt-1 whitespace-nowrap ${width} ${name === "Accueil" ? "border-[#ffc629] text-[#ffc629]" : "border-transparent"}`}
        >
          {name}
        </button>
      ))}
      <button type="button" aria-label="Aide" className="mt-[6px] mr-[7px] ml-auto flex size-[15px] items-center justify-center rounded-full border border-white text-[10px] leading-none">
        ?
      </button>
    </nav>
  );
}

/* ---------- ribbon ---------- */

function Group({ label, children }: { label: string; children: ReactNode }) {
  return (
    <>
      <section className="flex shrink-0 flex-col">
        <div className="flex h-[74px] pt-[3px]">{children}</div>
        <div className="flex h-[15px] items-center text-[#156a92]">
          <span className="flex-1 text-center whitespace-nowrap">{label}</span>
          <span className="mb-1 flex w-4 justify-center text-[#111]"><Caret /></span>
        </div>
      </section>
      <span className="mt-[5px] h-[78px] w-px shrink-0 bg-[#c2c2c2]" />
    </>
  );
}

function Big({ icon, lines, width, caret, plus }: { icon: string; lines: string[]; width: string; caret?: boolean; plus?: boolean }) {
  return (
    <button type="button" className={`flex shrink-0 flex-col items-center leading-[13px] whitespace-nowrap ${plus ? "pt-[2px]" : "pt-1"} ${width}`}>
      <span className="mb-1"><Icon name={icon} size={32} /></span>
      {lines.map((line, i) => (
        <span key={line} className="flex items-center gap-1">
          {line}
          {caret && i === lines.length - 1 && <Caret />}
        </span>
      ))}
      {plus && <span className="mt-1 flex"><Caret /></span>}
    </button>
  );
}

function Medium({ icon, label }: { icon: string; label: string }) {
  return (
    <button type="button" className="flex h-[34px] items-center gap-1 whitespace-nowrap">
      <Icon name={icon} />
      {label}
    </button>
  );
}

function Small({ icon, label }: { icon: string; label: string }) {
  return (
    <button type="button" className="flex h-[23px] items-center gap-[3px] whitespace-nowrap">
      <Icon name={icon} size={17} />
      {label}
    </button>
  );
}

function Tiny({ icon, label }: { icon: string; label: string }) {
  return (
    <button type="button" aria-label={label} className="flex h-[23px] w-[25px] items-center justify-center">
      <Icon name={icon} size={17} />
    </button>
  );
}

function Ribbon() {
  return (
    <div className="flex h-[89px] border-b border-[#b5b5b5]">
      <Group label="Constr...">
        <div className="w-[63px] pl-3">
          <button type="button" aria-label="Plan de référence" className="flex h-[34px] items-center gap-[9px]">
            <Icon name="plane" />
            <Caret />
          </button>
          <button type="button" aria-label="Esquisse" className="flex h-[34px] items-center">
            <Icon name="sketch" />
          </button>
        </div>
      </Group>
      <Group label="Base">
        <div className="flex pl-[7px]">
          <Big icon="extrude" lines={["Extrusion"]} width="w-[56px]" />
          <Big icon="revolve" lines={["Révolution"]} width="w-[64px]" />
          <Big icon="hole" lines={["Perçage"]} width="w-[48px]" />
          <Big icon="unite" lines={["Unir"]} width="w-[46px]" />
          <Big icon="subtract" lines={["Soustraire"]} width="w-[54px]" />
          <Big icon="trim" lines={["Relimiter", "le corps"]} width="w-[62px]" caret />
          <Big icon="fillet" lines={["Raccord", "d'arêtes"]} width="w-[50px]" />
          <Big icon="fillet" lines={["Raccord", "d'arêtes"]} width="w-[58px]" caret />
          <Big icon="chamfer" lines={["Chanfrein"]} width="w-[58px]" />
          <div className="ml-[8px] w-[87px]">
            <Medium icon="draft" label="Dépouille" />
            <Medium icon="shell" label="Coque" />
          </div>
          <div className="w-[162px]">
            <Medium icon="bossPattern" label="Duplication de primitives" />
            <Medium icon="bossMirror" label="Miroir de primitives" />
          </div>
          <Big icon="boss" lines={["Plus"]} width="w-[47px]" plus />
        </div>
      </Group>
      <Group label="Synchronous Modeling">
        <div className="w-[94px] pl-[12px]">
          <Small icon="moveFace" label="Déplacer" />
          <Small icon="deleteFace" label="Supprimer" />
          <Small icon="replaceFace" label="Remplacer" />
        </div>
        <div className="w-[200px]">
          <Medium icon="offsetFace" label="Décalage" />
          <Medium icon="resizeBlend" label="Redimensionner le raccordement" />
        </div>
        <Big icon="refresh" lines={["Plus"]} width="w-[51px]" plus />
      </Group>
      <Group label="Organi...">
        <div className="w-[60px] pl-[10px]">
          <button type="button" aria-label="Grouper" className="flex h-[34px] items-center">
            <Icon name="group" />
          </button>
          <button type="button" aria-label="Modifier le groupe" className="flex h-[34px] items-center gap-[9px]">
            <Icon name="groupEdit" />
            <Caret />
          </button>
        </div>
      </Group>
      <Group label="Editer">
        <div className="flex pl-[6px]">
          <Big icon="bossDim" lines={["Cote de", "primitive"]} width="w-[56px]" />
          <div className="w-[202px] pl-px">
            <Small icon="bossSwap" label="Remplacer la primitive" />
            <Small icon="lockPart" label="Retarder la mise à jour du modèle" />
            <Small icon="updatePart" label="Mettre à jour le modèle" />
          </div>
          <Big icon="bossRedo" lines={["Plus"]} width="w-[46px]" plus />
        </div>
      </Group>
      <Group label="Réexéc...">
        <div className="grid w-[63px] grid-cols-[25px_25px] content-start pl-2">
          <Tiny icon="first" label="Début" />
          <Tiny icon="last" label="Fin" />
          <Tiny icon="prev" label="Précédent" />
          <Tiny icon="next" label="Suivant" />
          <Tiny icon="playGray" label="Réexécuter" />
          <Tiny icon="bossPlay" label="Réexécuter la primitive" />
        </div>
      </Group>
      <Group label="Conception Aéro">
        <div className="w-[106px] pl-[12px]">
          <Small icon="aeroFold" label="Pli Aéro" />
          <Small icon="aeroRib" label="Nervure Aéro" />
          <Small icon="aeroSupport" label="Support Aéro" />
        </div>
        <div className="w-[30px]">
          <Tiny icon="aeroA" label="Soyage" />
          <Tiny icon="aeroB" label="Congé" />
          <Tiny icon="aeroC" label="Paroi" />
        </div>
      </Group>
      <Group label="Mesurer">
        <Big icon="ruler" lines={["Mesurer"]} width="w-[64px]" />
      </Group>
      <span className="mt-[77px] mr-[6px] ml-auto"><Caret /></span>
    </div>
  );
}

/* ---------- selection bar ---------- */

function Tool({ icon, width = "w-[32px]", on }: { icon: string; width?: string; on?: boolean }) {
  return (
    <button type="button" aria-label={icon} className={`flex h-[30px] shrink-0 items-center justify-center ${width} ${on ? "bg-[#b0d8e2]" : ""}`}>
      <Icon name={icon} />
    </button>
  );
}

const CaretCell = () => <span className="flex w-4 shrink-0 justify-center"><Caret /></span>;
const BarSep = ({ className }: { className: string }) => <span className={`h-[26px] w-px shrink-0 bg-[#c2c2c2] ${className}`} />;

function Picker({ label, value, width }: { label: string; value: string; width: string }) {
  return (
    <span className={`relative flex shrink-0 ${width}`}>
      <select aria-label={label} className="h-[22px] w-full appearance-none border border-[#6e6e6e] bg-white px-[3px] leading-5">
        <option>{value}</option>
      </select>
      <span className="pointer-events-none absolute top-[9px] right-[5px] flex"><Caret /></span>
    </span>
  );
}

function SelectionBar() {
  return (
    <div className="flex h-[34px] items-center border-b border-[#a9a9a9]">
      <button type="button" className="ml-[15px] flex items-center">
        <Burger className="mr-[9px] text-[#333]" />
        <span><span className="underline">M</span>enu</span>
        <span className="ml-1 flex"><Caret /></span>
      </button>
      <BarSep className="ml-2" />
      <span className="ml-[11px] flex"><Picker label="Filtre de sélection" value="Pas de filtre de sélec..." width="w-[137px]" /></span>
      <span className="ml-[6px] flex"><Tool icon="funnel" /></span>
      <span className="ml-[3px] flex"><Picker label="Portée" value="Tout l'assemblage" width="w-[143px]" /></span>
      <span className="ml-[7px] flex"><Tool icon="rotateCw" /></span>
      <Tool icon="selTop" width="w-[31px]" on />
      <Tool icon="boxTarget" width="w-[33px]" />
      <Tool icon="squareTarget" />
      <CaretCell />
      <Tool icon="cubeEdge" width="w-[35px]" />
      <Tool icon="cubeWire" width="w-[31px]" on />
      <BarSep className="mr-[8px] ml-[6px]" />
      <Tool icon="zoomBox" />
      <Tool icon="pan" />
      <Tool icon="orbit" width="w-[34px]" />
      <Tool icon="cube" width="w-[34px]" />
      <Tool icon="cubeGear" width="w-[34px]" />
      <Tool icon="fit" width="w-[30px]" />
      <CaretCell />
      <Tool icon="bracket" width="w-[34px]" />
      <CaretCell />
      <Tool icon="shade" width="w-[31px]" on />
      <CaretCell />
      <span className="ml-[2px] flex gap-px">
        <Tool icon="topEdges" width="w-[31px]" on />
        <Tool icon="shadeEdges" width="w-[31px]" on />
      </span>
      <CaretCell />
      <Tool icon="eyeList" width="w-[33px]" />
      <CaretCell />
      <Tool icon="layers" width="w-[30px]" />
      <CaretCell />
      <span className="flex w-[26px] justify-center">
        <input type="checkbox" aria-label="Section" className="size-[13px] appearance-none rounded-[3px] border border-[#444]" />
      </span>
      <Tool icon="clip" width="w-[26px]" />
      <Tool icon="windowLight" width="w-[34px]" />
      <CaretCell />
      <Tool icon="clipTool" />
      <Tool icon="clipToggle" />
      <BarSep className="mx-2" />
      <Tool icon="brush" />
      <Tool icon="ruler" />
      <BarSep className="mr-1 ml-[7px]" />
      <Tool icon="addInto" />
      <Tool icon="addPlus" />
      <Tool icon="addMove" width="w-[36px]" />
      <Tool icon="three" />
      <button type="button" className="ml-[5px] w-[129px] text-left whitespace-nowrap">Exporter un fichier STEP</button>
      <button type="button" className="w-[122px] text-left whitespace-nowrap">Exporter un fichier STL</button>
      <BarSep className="" />
      <span className="mt-3 mr-[6px] ml-auto flex"><Caret /></span>
    </div>
  );
}

/* ---------- assembly navigator ---------- */

const railIcons = ["stackLink", "bracket", "bell", "books", "eye", "press", "bracketDim", "partMag", "info", "globe", "clock", "tools", "spectrum", "wand"];

function Rail() {
  return (
    <aside className="flex w-[37px] shrink-0 flex-col border-r border-[#a6a6a6] bg-[#bdbdbd]">
      <button type="button" aria-label="Paramètres" className="flex h-[31px] items-center justify-center">
        <Icon name="bigGear" size={17} />
      </button>
      <button type="button" aria-label="Navigateur d'assemblage" className="-mr-px ml-[3px] flex h-[43px] items-center border border-r-0 border-[#a6a6a6] bg-[#f0f0f0] pl-1">
        <Icon name="grayStack" />
      </button>
      {railIcons.map((name) => (
        <button key={name} type="button" aria-label={name} className="flex h-11 items-center pl-[8px]">
          <Icon name={name} />
        </button>
      ))}
    </aside>
  );
}

type Kind = "folder" | "root" | "group" | "part" | "asm";
type Row = { name: string; kind: Kind; icon?: string; mass?: string; pos?: "ground" | "full" | "half"; mod?: "disk" | "box" };

const rows: Row[] = [
  { name: "Sections", kind: "folder" },
  { name: "_Moteur_ventilo (Ordre: New Or...", kind: "root", mass: "0.2088", mod: "disk" },
  { name: "Duplications de composants", kind: "group", icon: "stackPattern" },
  { name: "Contraintes", kind: "group", icon: "stackLink" },
  { name: "Couvercle_carter", kind: "part", mass: "0.0000", pos: "ground", mod: "disk" },
  { name: "Corps_Moteur Arriere", kind: "part", pos: "full", mod: "box" },
  { name: "Roulement_petit x 2", kind: "part", pos: "half", mod: "box" },
  { name: "Corps_Moteur Avant", kind: "part", pos: "full", mod: "box" },
  { name: "Rondelle_spe x 4", kind: "part", mass: "0.0001", pos: "half", mod: "box" },
  { name: "VIS M4 x 10 x 3", kind: "part", mass: "0.0015", pos: "half", mod: "box" },
  { name: "Boite_vitesse", kind: "asm", mass: "0.1816", pos: "full", mod: "box" },
  { name: "Armature moteur", kind: "part", pos: "full", mod: "box" },
  { name: "Vis M4x0.7x25 x 4", kind: "part", mass: "0.0030", pos: "half", mod: "box" },
  { name: "Oscillateur", kind: "part", mass: "0.0101", pos: "half", mod: "box" },
  { name: "Ecrou M4x0.7 x 4", kind: "part", pos: "half", mod: "box" },
  { name: "Fixation_base", kind: "part", mass: "0.0000", pos: "half", mod: "box" },
  { name: "Arbre guide", kind: "part", mass: "0.0000", pos: "half", mod: "box" },
  { name: "Vis M4 x 4", kind: "part", mass: "0.0000", pos: "half", mod: "box" },
  { name: "Vis M4x0.7 L10 x 2", kind: "part", mass: "0.0000", pos: "half", mod: "box" },
];

const BLANK_ROWS = 22;

function Check({ label }: { label: string }) {
  return (
    <span className="relative flex shrink-0">
      <input type="checkbox" defaultChecked aria-label={label} className="size-[14px] appearance-none border border-[#444] bg-white" />
      <svg width="10" height="10" viewBox="0 0 10 10" className="pointer-events-none absolute top-[2px] left-[2px]" fill="none" aria-hidden="true">
        <path d="M1 5l3 4 5-8" stroke="#e8112d" strokeWidth="2" />
      </svg>
    </span>
  );
}

function Guide({ kind, last }: { kind: Kind; last: boolean }) {
  const outer = kind === "folder" || kind === "root";
  const x = outer ? 9.5 : 28.5;
  const box = kind === "root" || kind === "group" || kind === "asm";
  const trunk = kind === "folder" ? "M9.500 10v10" : kind === "root" ? "M9.500 0v10M28.500 16v4" : last ? "M28.500 0v10" : "M28.500 0v20";
  return (
    <svg width={outer ? 20 : 39} height="19" viewBox={`0 0 ${outer ? 20 : 39} 19`} className="shrink-0 overflow-visible" fill="none" aria-hidden="true">
      <path d={`${trunk}M${x} 10.500h9`} stroke="#999" strokeDasharray="1 1" />
      {box && (
        <>
          <rect x={x - 4} y="6.500" width="8" height="8" fill="#fff" stroke="#a0a0a0" />
          <path d={kind === "root" ? `M${x - 2} 10.500h4` : `M${x - 2} 10.500h4M${x} 8.500v4`} stroke="#000" />
        </>
      )}
    </svg>
  );
}

function NameCell({ row, last }: { row: Row; last: boolean }) {
  const checkable = row.kind !== "folder" && row.kind !== "group";
  const icon = row.icon ?? (row.kind === "folder" ? "folder" : row.kind === "part" ? "part" : "asm");
  const iconGap = row.kind === "part" ? "ml-[2px]" : row.kind === "root" ? "mr-[2px]" : "";
  return (
    <span className="flex h-[19px] items-center">
      <Guide kind={row.kind} last={last} />
      {checkable && <Check label={row.name} />}
      <span className={iconGap}><Icon name={icon} size={row.kind === "part" ? 15 : row.kind === "group" || row.kind === "folder" ? 16 : 17} /></span>
      <span className="ml-[3px] pt-px">{row.name}</span>
    </span>
  );
}

function Position({ pos }: { pos?: Row["pos"] }) {
  if (!pos) return null;
  if (pos === "ground") return <Icon name="ground" size={14} />;
  return (
    <svg width="12" height="12" viewBox="0 0 12 12" className="shrink-0" aria-hidden="true">
      {pos === "full" ? (
        <circle cx="6" cy="6" r="6" fill="#444" />
      ) : (
        <>
          <circle cx="6" cy="6" r="5" fill="#fff" stroke="#000" strokeWidth="1.500" />
          <path d="M6 1a5 5 0 0 0 0 10z" fill="#000" />
        </>
      )}
    </svg>
  );
}

const headCell = "overflow-hidden border-r border-b border-[#c4c4c4] pl-[6px] text-left font-normal whitespace-nowrap";
const cell = "h-5 overflow-hidden border-r border-b border-[#e3e3e3] p-0 whitespace-nowrap";

function Navigator() {
  return (
    <section className="flex w-[520px] shrink-0 flex-col border-r border-[#a6a6a6] pr-[9px] pl-2">
      <header className="flex h-[26px] shrink-0 items-center pb-[2px]">
        <Icon name="grayStack" size={16} />
        <h2 className="ml-[2px] flex-1">Navigateur d'assemblage</h2>
        <button type="button" aria-label="Agrandir" className="mr-[2px] h-[11px] w-3 border border-t-2 border-black" />
      </header>
      <div className="flex min-h-0 flex-1 flex-col border border-[#bdbdbd]">
        <div className="min-h-0 flex-1 overflow-hidden border-b border-white">
          <table className="w-full table-fixed border-separate border-spacing-0">
            <colgroup>
              <col className="w-[251px]" />
              <col className="w-[50px]" />
              <col className="w-[73px]" />
              <col className="w-[36px]" />
              <col className="w-[42px]" />
              <col className="w-[24px]" />
              <col />
            </colgroup>
            <thead>
              <tr className="h-[19px]">
                <th className={headCell}>
                  <span className="flex items-center">
                    Nom de pièce descriptif
                    <svg width="9" height="5" viewBox="0 0 9 5" className="ml-[20px]" aria-hidden="true"><path d="M0 5L4.500 0 9 5z" /></svg>
                  </span>
                </th>
                <th className={headCell}>Mass...</th>
                <th className={headCell}>NX_Mater...</th>
                <th className={headCell}>Inf...</th>
                <th className={headCell}>Em...</th>
                <th className={headCell}>L..</th>
                <th className={`${headCell} border-r-0`}>Mo</th>
              </tr>
            </thead>
            <tbody>
              {rows.map((row, i) => (
                <tr key={row.name} className={`odd:bg-[#fafafa] even:bg-[#f4f4f4] ${row.kind === "root" ? "font-bold" : ""}`}>
                  <td className={`${cell} border-r-black`}><NameCell row={row} last={i === rows.length - 1} /></td>
                  <td className={`${cell} pt-px pl-1`}>{row.mass}</td>
                  <td className={cell} />
                  <td className={cell} />
                  <td className={cell}><span className="flex pl-[6px]"><Position pos={row.pos} /></span></td>
                  <td className={cell}>
                    <span className="flex justify-center">
                      {row.mod === "disk" && <Icon name="floppyBold" size={17} />}
                      {row.mod === "box" && <span className="size-[14px] border border-dashed border-[#333]" />}
                    </span>
                  </td>
                  <td className={`${cell} border-r-0`} />
                </tr>
              ))}
              {Array.from({ length: BLANK_ROWS }, (_, i) => (
                <tr key={i} className="odd:bg-[#fafafa] even:bg-[#f4f4f4]">
                  <td className={`${cell} border-r-black`} />
                  <td className={cell} />
                  <td className={cell} />
                  <td className={cell} />
                  <td className={cell} />
                  <td className={cell} />
                  <td className={`${cell} border-r-0`} />
                </tr>
              ))}
            </tbody>
          </table>
        </div>
        <div className="flex h-[17px] items-center pl-[17px]">
          <span className="h-[2px] w-[330px] bg-[#888]" />
        </div>
      </div>
      <div className="mt-[2px] h-[6px] shrink-0 border border-[#a6a6a6] bg-[#bdbdbd]" />
      {["Aperçu", "Dépendances"].map((name) => (
        <button key={name} type="button" className="flex h-[23px] shrink-0 items-center gap-[9px] border-b-2 border-[#d0d0d0] pt-[3px] pl-[9px] text-[13px] text-[#006487] first-of-type:mt-[2px]">
          <svg width="5" height="10" viewBox="0 0 5 10" aria-hidden="true"><path d="M0 0l5 5-5 5z" fill="#006487" /></svg>
          {name}
        </button>
      ))}
      <div className="h-[5px] shrink-0" />
    </section>
  );
}

const sideTools = ["floppyDark", "sketch", "subtract", "extrude", "revolve", "hole", "fillet", "fitGray", "noSelect", "treeMagGray", "treeMag", "ghostMag", "stackMag", "stackPattern", "stackMirror", "explode"];

function SideTools() {
  return (
    <div className="flex w-[34px] shrink-0 flex-col items-center pt-[6px]">
      {sideTools.map((name) => (
        <button key={name} type="button" aria-label={name} className={`flex h-8 w-[31px] items-center justify-center ${name === "noSelect" ? "bg-[#b0d8e2]" : ""}`}>
          <Icon name={name} />
        </button>
      ))}
      <span className="mt-[2px] h-px w-[27px] bg-[#bdbdbd]" />
      <svg width="4" height="6" viewBox="0 0 4 6" className="mt-auto mr-4 mb-[6px]" aria-hidden="true"><path d="M4 0v6L0 3z" /></svg>
    </div>
  );
}

/* ---------- graphics window ---------- */

function Housing() {
  return (
    <g stroke="#3a3a3a" strokeWidth="3" strokeLinejoin="round">
      <path d="M185 320L270 290C300 284 320 288 340 293L725 182C780 178 850 180 895 172L1285 58C1310 50 1370 50 1400 70L1750 238C1830 255 1880 350 1882 410C1888 600 1880 700 1878 720C1868 900 1800 1120 1715 1250C1710 1270 1695 1285 1670 1292L1300 1410L1165 1500L805 1615L790 1645L655 1678L590 1000Z" fill="url(#sideShade)" stroke="#2f6f54" strokeWidth="2" />
      <path d="M190 320L270 290C300 284 320 288 340 293L725 182L745 200L375 308L240 330Z" fill="#37bd88" stroke="none" />
      <path d="M895 172L1285 58C1310 50 1370 50 1400 70L1735 238L1340 62L928 182Z" fill="#3dbb8b" stroke="none" />
      <path d="M340 295L735 478L630 508L240 329Z" fill="#27ba82" />
      <path d="M375 308L745 200L1135 380L760 488L735 478L375 308Z" fill="#26ba80" />
      <path d="M725 182C780 178 850 180 895 172L928 182L1315 360L1135 380L745 200Z" fill="#35c088" strokeWidth="2" />
      <path d="M928 182L1344 62L1733 242L1315 360Z" fill="#26ba80" />

      <path d="M760 488L1135 380C1300 430 1400 480 1440 590L890 760C880 640 820 530 760 488Z" fill="url(#bandFront)" />
      <path d="M1315 360L1733 242C1800 290 1840 360 1843 447L1477 562C1460 490 1400 410 1315 360Z" fill="url(#bandRear)" />
      <path d="M1733 242C1800 235 1875 320 1882 415L1843 447C1840 360 1800 290 1733 242Z" fill="url(#bandRear)" />
      <path d="M630 508L735 478C830 520 892 640 890 790L783 822C782 700 735 555 630 508Z" fill="url(#bandRim)" />
      <path d="M1843 447C1848 600 1843 690 1841 737C1830 900 1780 1100 1680 1284C1705 1290 1712 1260 1715 1250C1800 1120 1868 900 1878 720C1884 650 1884 500 1882 415Z" fill="url(#rearRim)" strokeWidth="2" />
      <path d="M1841 737L1879 710" />
      <path d="M1135 380C1300 430 1400 480 1440 590C1475 740 1465 860 1420 980C1370 1130 1290 1290 1160 1500L1220 1440C1320 1270 1400 1150 1450 980C1500 830 1505 700 1477 562C1460 490 1400 410 1315 360Z" fill="url(#groove)" />
      <path d="M1235 1425L1680 1285M805 1590L1165 1482M1220 1440L1300 1412" fill="none" />
      <path d="M805 1590L1165 1482L1160 1502L800 1620Z" fill="#06603f" opacity=".5" stroke="none" />

      <path d="M783 822L890 790C896 1050 860 1320 807 1590C805 1620 800 1635 780 1642L660 1676C690 1670 700 1630 705 1600C745 1380 786 1050 783 822Z" fill="url(#rimSide)" />
      <path d="M800 887L888 858M695 1640L803 1606" fill="none" />
      <path d="M79 490C78 400 105 320 185 320C205 318 220 320 240 330L630 508C735 555 785 700 783 820C786 1050 745 1380 705 1600C700 1650 690 1678 655 1678C635 1678 615 1660 590 1648L220 1480C185 1462 172 1430 168 1400C150 1310 135 1220 125 1120C95 860 76 700 79 490Z" fill="#0a7850" />
    </g>
  );
}

function FaceDetails() {
  return (
    <g stroke="#3a3a3a" strokeWidth="3" strokeLinejoin="round">
      <ellipse cx="375" cy="450" rx="50" ry="42" fill="url(#softDark)" stroke="none" />
      <ellipse cx="490" cy="520" rx="60" ry="45" fill="url(#softDark)" stroke="none" />
      <path d="M165 600C170 540 250 475 310 478L352 510C362 545 365 570 360 590C345 610 320 612 295 628C250 655 245 690 225 697C190 695 160 650 165 600Z" fill="#049a62" />
      <path d="M325 590C325 560 345 550 358 555L360 592C345 610 320 610 298 626L322 602Z" fill="#8a7f6c" />
      <path d="M172 602C172 560 230 490 300 482M172 602C175 650 195 680 225 692M196 678L212 668L218 690" fill="none" stroke="#0b5a3c" />
      <ellipse cx="431" cy="628" rx="33" ry="45" transform="rotate(-12 431 628)" fill="url(#hole)" />
      <path d="M368 575L408 557L450 572L405 592Z" fill="#14a870" />
      <path d="M368 575L405 592L447 576V584L403 602L369 586Z" fill="#0d8a5b" />
      <path d="M312 473L372 454C392 460 390 492 384 498L322 519Z" fill="url(#pin)" />
      <ellipse cx="313" cy="496" rx="15" ry="22" fill="#12a36c" />
      <path d="M430 528L490 509C510 515 508 546 502 552L442 572Z" fill="url(#pin)" />
      <ellipse cx="430" cy="549" rx="14" ry="21" fill="#12a36c" />

      <path d="M542 690C540 650 555 630 575 631C640 650 690 780 715 900C722 930 718 965 705 972C680 975 650 950 637 905C620 840 590 790 565 742C550 720 543 710 542 690Z" fill="#6a6352" />
      <path d="M555 650L570 632C580 640 588 650 586 665L575 692C570 700 560 692 552 688" fill="#7d745f" />
      <path d="M552 692C575 690 620 740 655 830L690 905C700 915 715 905 716 900C700 830 670 760 640 740C615 720 600 700 597 682C605 660 640 690 650 720" fill="none" />
      <path d="M645 715C680 780 700 850 716 905L700 912C690 860 665 790 632 742Z" fill="#9b9078" />
      <path d="M545 690C548 720 560 735 570 752C600 800 620 840 635 905C640 940 670 968 690 972" fill="none" stroke="#14c884" strokeWidth="5" />
      <path d="M695 938L712 932L708 965M697 940V968" fill="none" />
      <ellipse cx="658" cy="1060" rx="32" ry="50" transform="rotate(-10 658 1060)" fill="url(#hole)" />
      <ellipse cx="203" cy="852" rx="30" ry="50" transform="rotate(-16 203 852)" fill="url(#hole)" />

      <path d="M66 500L76 493L96 505V572L66 568Z" fill="#0c9a64" />
      <path d="M76 510H94V572M96 512L152 534V544L100 522M98 562L130 580V590L92 572" fill="none" />
      <path d="M710 786L780 818L800 826V892L762 888V822L710 798Z" fill="#0c9a64" />
      <path d="M762 822L800 826" />
      <path d="M734 862L762 872V882L734 872Z" fill="#0d8a5b" />

      <g transform="translate(0 810)">
        <path d="M142 190C138 150 150 130 165 130L290 345C320 370 325 420 318 440C308 470 280 475 260 460C215 400 160 290 142 190Z" fill="#07b070" />
        <path d="M152 190C165 280 215 380 265 458C275 466 285 468 295 468" fill="none" />
        <ellipse cx="430" cy="120" rx="160" ry="210" fill="url(#softDark)" stroke="none" />
        <path d="M205 62C235 25 290 5 400 -18C480 -10 533 90 533 200C533 250 520 290 480 305L330 348Z" fill="url(#bossShade)" strokeWidth="2" stroke="#0a5a3c" />
        <ellipse cx="275" cy="197" rx="102" ry="152" transform="rotate(-11 275 197)" fill="#0b8f5f" />
        <ellipse cx="260" cy="197" rx="88" ry="143" transform="rotate(-11 260 197)" fill="#0a7d53" />
        <ellipse cx="260" cy="198" rx="77" ry="126" transform="rotate(-9 260 198)" fill="url(#bore)" />

        <ellipse cx="431" cy="480" rx="32" ry="50" transform="rotate(-10 431 480)" fill="url(#hole)" />
        <path d="M368 540L402 525L448 538L405 555Z" fill="#14a870" />
        <path d="M368 540L405 555L448 538V546L403 566L370 550Z" fill="#0d8a5b" />

        <path d="M500 530C500 500 520 490 550 486C590 470 600 450 615 420C640 400 660 405 675 425C695 450 700 480 695 510C680 560 620 625 560 627C520 620 500 580 500 530Z" fill="#6a6352" />
        <path d="M615 425C640 403 660 408 672 425L625 452L608 440Z" fill="#a59a84" />
        <path d="M508 532C520 522 545 522 558 532V572L512 572Z" fill="#d2c6a8" />
        <path d="M510 545C525 555 545 552 558 545" fill="none" />
        <path d="M512 572H556V612C540 610 520 600 512 572Z" fill="#0f8f94" />
        <path d="M518 585H556M524 598H556" fill="none" stroke="#0a5a5e" />
        <path d="M508 528L514 498L556 488L552 520Z" fill="#0b7d54" />
        <path d="M555 545C560 530 580 535 590 545C610 560 640 565 660 562C630 600 600 620 556 626Z" fill="url(#tube)" />
        <path d="M566 470L590 500M588 460V498M600 515L660 550M675 510C675 480 685 470 694 462" fill="none" />
        <path d="M504 530C506 580 525 618 556 624" fill="none" stroke="#12c080" strokeWidth="5" />

        <path d="M133 458L160 455L165 528L143 528Z" fill="#0c9a64" />
        <path d="M160 460L226 458V468L162 466M165 515L238 517V528L168 527M150 458L156 527" fill="none" />
        <path d="M258 498L270 505C285 535 310 560 335 575V626L262 556Z" fill="#10a068" />
        <path d="M270 505V548L335 600M300 585L333 568" fill="none" />
        <path d="M382 618L480 660V710L382 666Z" fill="#12b077" />
        <path d="M390 624L480 662V684L390 655Z" fill="#fff" />
        <path d="M450 682L468 656L480 660V692Z" fill="#5587bc" stroke="none" />
        <path d="M526 668L604 654L600 712C580 718 550 722 528 718Z" fill="url(#tube)" />
        <path d="M526 668L536 666V718L528 718Z" fill="#12b077" />
        <path d="M636 648L700 708L735 732L722 787L688 778L694 722L636 660Z" fill="#0c9a64" />
        <path d="M624 696L692 750V762L624 706Z" fill="#0d8a5b" />
        <path d="M700 710L712 732L706 782M712 732L735 732" fill="none" />
      </g>
    </g>
  );
}

function Base() {
  return (
    <g transform="translate(300 1410)" stroke="#333d48" strokeWidth="3" strokeLinejoin="round">
      <path d="M475 200L860 50L965 8L1041 38V118L1027 124V152L1018 158V480C1015 530 985 600 955 640L825 570L835 580C770 680 700 710 620 710C560 705 510 690 470 630Z" fill="#588dc0" />
      <path d="M925 30L962 20V55L925 65Z" fill="#fff" />
      <path d="M965 15L1010 36L962 52Z" fill="#44698f" />
      <path d="M908 25L965 8L1041 38L1041 46L835 110" fill="none" />
      <path d="M596 246L1041 118M760 222L1027 152M530 605C535 440 620 250 770 222M530 605L735 550" fill="none" />
      <path d="M735 550C745 575 800 585 830 550C840 540 845 525 845 522L945 495V635L828 570L838 578" fill="#5283b4" />
      <path d="M934 500V630M845 522L825 570" fill="none" />
      <path d="M735 550C745 575 770 580 800 572C825 562 842 545 850 520L800 460L735 500Z" fill="#588dc0" stroke="none" />
      <path d="M735 550C745 575 770 580 800 572C825 562 842 545 850 520" fill="none" />
      <ellipse cx="789" cy="508" rx="37" ry="45" transform="rotate(12 789 508)" fill="#47719c" />
      <path d="M757 490C775 470 800 490 812 500L808 540C790 560 765 555 755 530Z" fill="#5a90c6" />
      <path d="M775 480L825 500M780 475L812 505L802 530" fill="none" />

      <path d="M181 315V605C200 680 440 680 475 630V300Z" fill="url(#cyl)" />
      <path d="M67 130V240C90 360 570 360 597 250V160L340 90Z" fill="url(#cyl2)" />
      <path d="M67 130C67 200 160 250 330 250C480 248 597 210 597 160" fill="#6a9fd6" />
      <path d="M85 140C95 200 190 240 330 240C450 238 560 215 575 165L330 60Z" fill="#4c7aab" />
      <path d="M105 165L200 195L250 235M190 225L210 200M500 220L570 180M490 215L560 175" fill="none" />

      <path d="M435 475L500 505L450 628L375 580C355 560 360 490 435 475Z" fill="url(#cyl)" />
      <path d="M365 545L430 582" />
      <ellipse cx="482" cy="567" rx="50" ry="61" transform="rotate(10 482 567)" fill="#6a9fd6" />
      <ellipse cx="484" cy="567" rx="41" ry="52" transform="rotate(10 484 567)" fill="url(#bluebore)" />
      <path d="M465 530L525 556M460 535C465 560 450 580 443 590M530 560V608L510 612" fill="none" />
    </g>
  );
}

function Triad() {
  return (
    <g transform="translate(640 850)">
      <path d="M30 74L60 64L89 76V115L56 126L30 113ZM30 74L56 86L89 76M56 86V126" fill="#fff" stroke="#a8a8a8" />
      <path d="M57 75h5V44h3L59 27 53 44h4z" fill="#0a36d8" />
      <path d="M89 83l15-4 1 4 11-6-14 0 1 2-14 4z" fill="#2e9e34" stroke="#2e9e34" strokeWidth="2" />
      <path d="M73 101L91 110" stroke="#c8282c" strokeWidth="5" strokeLinecap="round" />
      <path d="M88 114L93 105 106 116z" fill="#e03438" />
      <g className="font-['Noto_Sans',sans-serif] text-[11px]" textAnchor="middle">
        <text x="59" y="22" fill="#2a5ae8">Z</text>
        <text x="123" y="79" fill="#3aa040">Y</text>
        <text x="111" y="123" fill="#e03438">X</text>
      </g>
    </g>
  );
}

function Viewport() {
  return (
    <svg viewBox="593 203 1327 853" className="min-h-0 w-full flex-1 border-l border-[#bdbdbd] bg-white" preserveAspectRatio="xMidYMid meet" role="img" aria-label="_Moteur_ventilo">
      <defs>
        <linearGradient id="sideShade" gradientUnits="userSpaceOnUse" x1="1100" y1="650" x2="1300" y2="1500">
          <stop offset="0" stopColor="#059b62" />
          <stop offset=".5" stopColor="#058c5a" />
          <stop offset="1" stopColor="#08764e" />
        </linearGradient>
        <linearGradient id="bandFront" gradientUnits="userSpaceOnUse" x1="760" y1="488" x2="842" y2="773">
          <stop offset="0" stopColor="#0fae70" />
          <stop offset=".5" stopColor="#00d686" />
          <stop offset=".85" stopColor="#02a669" />
          <stop offset="1" stopColor="#059b62" />
        </linearGradient>
        <linearGradient id="bandRear" gradientUnits="userSpaceOnUse" x1="1315" y1="360" x2="1381" y2="589">
          <stop offset="0" stopColor="#0fae70" />
          <stop offset=".45" stopColor="#00d686" />
          <stop offset=".9" stopColor="#02a669" />
          <stop offset="1" stopColor="#059b62" />
        </linearGradient>
        <linearGradient id="bandRim" gradientUnits="userSpaceOnUse" x1="700" y1="490" x2="800" y2="810">
          <stop offset="0" stopColor="#12ac70" />
          <stop offset=".5" stopColor="#00d686" />
          <stop offset="1" stopColor="#049c63" />
        </linearGradient>
        <linearGradient id="rimSide" x1="0" y1="0" x2="0" y2="1">
          <stop offset="0" stopColor="#049c63" />
          <stop offset="1" stopColor="#08724b" />
        </linearGradient>
        <linearGradient id="rearRim" x1="0" y1="0" x2="0" y2="1">
          <stop offset="0" stopColor="#10a26c" />
          <stop offset="1" stopColor="#067d53" />
        </linearGradient>
        <linearGradient id="groove" x1="0" y1="0" x2="0" y2="1">
          <stop offset="0" stopColor="#18b87b" />
          <stop offset=".35" stopColor="#1f9767" />
          <stop offset="1" stopColor="#1b5f43" />
        </linearGradient>
        <linearGradient id="hole" x1="0" y1="0" x2="1" y2="1">
          <stop offset="0" stopColor="#077a50" />
          <stop offset=".6" stopColor="#0dbd7c" />
          <stop offset="1" stopColor="#0a9a65" />
        </linearGradient>
        <linearGradient id="pin" x1="0" y1="0" x2=".3" y2="1">
          <stop offset="0" stopColor="#0a8a5b" />
          <stop offset=".5" stopColor="#06bb78" />
          <stop offset="1" stopColor="#075f40" />
        </linearGradient>
        <linearGradient id="bossShade" x1="0" y1="0" x2=".25" y2="1">
          <stop offset="0" stopColor="#0b8459" />
          <stop offset=".35" stopColor="#079c65" />
          <stop offset=".75" stopColor="#067049" />
          <stop offset="1" stopColor="#06553a" />
        </linearGradient>
        <linearGradient id="bore" x1="0" y1="0" x2=".2" y2="1">
          <stop offset="0" stopColor="#07794f" />
          <stop offset=".65" stopColor="#00d686" />
          <stop offset="1" stopColor="#08a76c" />
        </linearGradient>
        <radialGradient id="softDark">
          <stop offset=".3" stopColor="#043a27" stopOpacity=".6" />
          <stop offset="1" stopColor="#0a7850" stopOpacity="0" />
        </radialGradient>
        <linearGradient id="cyl">
          <stop offset="0" stopColor="#446c96" />
          <stop offset=".35" stopColor="#5f9bd9" />
          <stop offset=".5" stopColor="#5588bd" />
          <stop offset=".7" stopColor="#68adf2" />
          <stop offset="1" stopColor="#4d7fb2" />
        </linearGradient>
        <linearGradient id="cyl2">
          <stop offset="0" stopColor="#456d97" />
          <stop offset=".35" stopColor="#5f9bd9" />
          <stop offset=".45" stopColor="#5488be" />
          <stop offset=".68" stopColor="#68adf2" />
          <stop offset="1" stopColor="#4d7fb2" />
        </linearGradient>
        <linearGradient id="tube">
          <stop offset="0" stopColor="#6aa8ea" />
          <stop offset=".3" stopColor="#47719c" />
          <stop offset=".6" stopColor="#5f9ad8" />
          <stop offset="1" stopColor="#5080b2" />
        </linearGradient>
        <linearGradient id="bluebore" x1="0" y1="0" x2="1" y2="1">
          <stop offset="0" stopColor="#416890" />
          <stop offset="1" stopColor="#5e98d4" />
        </linearGradient>
      </defs>
      <g transform="translate(940 250) scale(.33333)">
        <Base />
        <Housing />
        <FaceDetails />
      </g>
      <Triad />
    </svg>
  );
}

function DocumentTabs() {
  return (
    <div className="flex h-[26px] shrink-0 border-b-2 border-[#005f87] pl-[6px]">
      <button type="button" className="flex items-center gap-1">
        <Icon name="discover" size={17} />
        Centre de découverte
      </button>
      <button type="button" className="ml-[28px] flex items-center gap-[5px]">
        <Icon name="bracket" size={17} />
        Tete_ventilo.prt
      </button>
      <span className="ml-[19px] flex items-center bg-[#005f87] pl-[6px] text-white">
        <button type="button" className="flex items-center gap-1">
          <Icon name="bracket" size={17} />
          <span className="ml-[2px]">_Moteur_ventilo.prt</span>
        </button>
        <button type="button" aria-label="Fermer l'onglet" className="mr-[7px] ml-[8px]">
          <svg width="10" height="10" viewBox="0 0 8 8" aria-hidden="true"><path d="M1 1l6 6M7 1L1 7" stroke="#fff" strokeWidth="2" /></svg>
        </button>
      </span>
    </div>
  );
}

export default function App() {
  return (
    <div className="flex h-screen flex-col overflow-hidden bg-[#f0f0f0] font-['Noto_Sans',sans-serif] text-[11px] text-[#1e1e1e]">
      <div className="shrink-0 bg-linear-to-r from-[#006487] to-[#007ba6] text-white">
        <TitleBar />
        <MenuTabs />
      </div>
      <Ribbon />
      <SelectionBar />
      <main className="flex min-h-0 flex-1">
        <Rail />
        <Navigator />
        <SideTools />
        <div className="flex min-w-0 flex-1 flex-col">
          <DocumentTabs />
          <Viewport />
        </div>
      </main>
      <footer className="h-6 shrink-0 border-t border-b-2 border-t-[#a9a9a9] border-b-[#006080]" />
    </div>
  );
}
